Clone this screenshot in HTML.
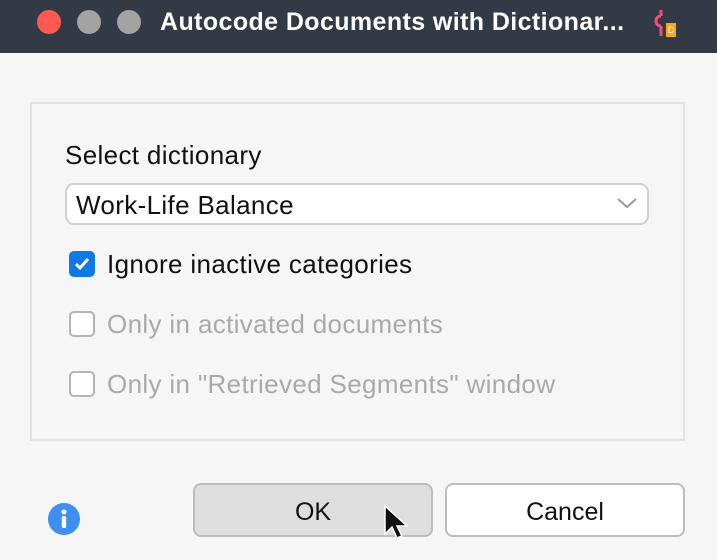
<!DOCTYPE html>
<html><head><meta charset="utf-8"><style>
*{margin:0;padding:0;box-sizing:border-box}
body{width:717px;height:560px;background:#f6f6f6;font-family:"Liberation Sans",sans-serif;position:relative;overflow:hidden}
.tb{position:absolute;left:0;top:0;width:717px;height:53px;background:#323a46}
.dot{position:absolute;top:10px;width:24px;height:24px;border-radius:50%}
.title{position:absolute;left:160px;top:8px;color:#fff;font-size:25px;font-weight:bold;letter-spacing:0.4px;white-space:nowrap}
.panel{position:absolute;left:30px;top:102px;width:655px;height:339px;border:2px solid #e2e2e2;background:#f6f6f6}
.t{position:absolute;font-size:26px;letter-spacing:0.35px;color:#111;white-space:nowrap;line-height:28px}
.g{color:#a9a9a9}
.sel{position:absolute;left:65px;top:183px;width:584px;height:42px;background:#fff;border:2px solid #d0d0d0;border-radius:9px}
.cb{position:absolute;left:69px;width:26px;height:26px;border-radius:5px;border:2px solid #b4b4b4;background:#fff}
.btn{position:absolute;top:483px;height:54px;border:2px solid #bdbdbd;border-radius:8px;font-size:25px;text-align:center;line-height:54px;color:#111}
</style></head><body>
<div class="tb">
<div class="dot" style="left:37px;background:#fe5a52"></div>
<div class="dot" style="left:77px;background:#a3a3a3"></div>
<div class="dot" style="left:117px;background:#a3a3a3"></div>
<div class="title">Autocode Documents with Dictionar...</div>
<svg style="position:absolute;left:652px;top:8px" width="30" height="32" viewBox="0 0 30 32"><path d="M9 2v6 M9 8a5 5 0 1 0 0 10 M9 18v10" stroke="#f0507a" stroke-width="3" fill="none"/><rect x="14" y="15" width="10" height="14" fill="#f5a623"/><text x="16" y="25" font-size="9" fill="#fff" font-family="Liberation Sans">D</text></svg>
</div>
<div class="panel"></div>
<div class="t" style="left:65px;top:141px">Select dictionary</div>
<div class="sel"></div>
<div class="t" style="left:76px;top:191px">Work-Life Balance</div>
<svg style="position:absolute;left:616px;top:196px" width="22" height="14"><path d="M2 3l9 8 9-8" stroke="#9a9a9a" stroke-width="2" fill="none"/></svg>
<div class="cb" style="top:251px;background:#0f79e8;border-color:#0f79e8"><svg width="22" height="22" style="position:absolute;left:0;top:0"><path d="M5 11l4 4 8-9" stroke="#fff" stroke-width="3" fill="none"/></svg></div>
<div class="t" style="left:107px;top:250px">Ignore inactive categories</div>
<div class="cb" style="top:311px"></div>
<div class="t g" style="left:107px;top:310px">Only in activated documents</div>
<div class="cb" style="top:371px"></div>
<div class="t g" style="left:107px;top:370px">Only in "Retrieved Segments" window</div>
<svg style="position:absolute;left:48px;top:503px" width="34" height="34"><circle cx="16" cy="16" r="16" fill="#3f8ff0"/><circle cx="16" cy="9" r="2.5" fill="#fff"/><rect x="13.8" y="13" width="4.4" height="12" rx="2" fill="#fff"/></svg>
<div class="btn" style="left:193px;width:240px;background:#dedede">OK</div>
<div class="btn" style="left:445px;width:240px;background:#fff">Cancel</div>
<svg style="position:absolute;left:382px;top:504px" width="26" height="40"><path d="M3 2v28l7-7 5 11 5-2-5-10h10z" fill="#111" stroke="#fff" stroke-width="1.5"/></svg>
</body></html>
